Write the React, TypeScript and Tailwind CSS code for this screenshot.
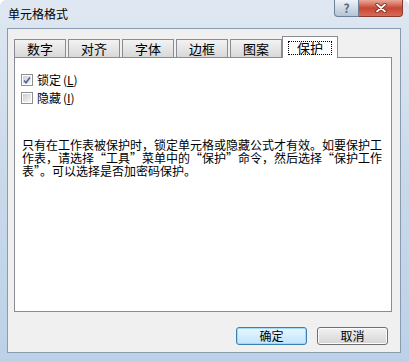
import React from 'react';

const tabs = ['数字', '对齐', '字体', '边框', '图案'];

const font = { fontFamily: '"Noto Sans CJK SC", "Liberation Sans", sans-serif' };

function CheckBox({ checked }: { checked?: boolean }) {
  return (
    <div className="w-[12px] h-[12px] border border-[#8e8f8f] bg-white p-[1px] shrink-0">
      <div className="w-full h-full bg-gradient-to-br from-[#cbcfd5] to-[#f6f6f6] flex items-center justify-center">
        {checked && (
          <svg width="9" height="9" viewBox="0 0 9 9">
            <path d="M1.2 4.6 L3.4 7 L7.8 1.2" fill="none" stroke="#4a5f97" strokeWidth="1.7" />
          </svg>
        )}
      </div>
    </div>
  );
}

export default function App() {
  return (
    <div
      className="w-[409px] h-[362px] flex flex-col bg-gradient-to-b from-[#dfe8f2] via-[#c9d9ea] to-[#bcd1e8] rounded-t-[6px] overflow-hidden text-black"
      style={font}
    >
      {/* Title bar */}
      <div className="h-[28px] shrink-0 flex items-start justify-between pl-[8px] pr-[6px]">
        <span className="mt-[6px] text-[12px] leading-[16px]">单元格格式</span>
        <div className="flex">
          <div className="w-[25px] h-[17px] border border-[#6e7f96] border-t-0 rounded-bl-[4px] bg-gradient-to-b from-[#eef3f8] to-[#b4c3d5] flex items-center justify-center text-[12px] leading-none font-bold text-[#5a6878]">
            ?
          </div>
          <div className="w-[44px] h-[17px] border border-[#8a3a2f] border-t-0 border-l-0 rounded-br-[4px] bg-gradient-to-b from-[#e9a797] via-[#c64635] to-[#d86a55] flex items-center justify-center">
            <svg width="12" height="10" viewBox="0 0 12 10">
              <path d="M2 1.5 L10 8.5 M10 1.5 L2 8.5" stroke="#5b1e16" strokeWidth="3.2" strokeLinecap="round" />
              <path d="M2 1.5 L10 8.5 M10 1.5 L2 8.5" stroke="#ffffff" strokeWidth="1.8" strokeLinecap="round" />
            </svg>
          </div>
        </div>
      </div>

      {/* Client area */}
      <div className="flex-1 ml-[7px] mr-[8px] mb-[9px] bg-[#f0f0f0] border border-[#8a9bb0] pt-[7px] px-[6px]">
        {/* Tabs */}
        <div className="flex items-end h-[21px] relative z-10">
          {tabs.map((t, i) => (
            <div
              key={t}
              className={
                'w-[52px] h-[18px] border border-b-0 border-[#898c95] bg-gradient-to-b from-[#f3f3f3] to-[#d8d8d8] flex items-center justify-center text-[13px] leading-none ' +
                (i < tabs.length - 1 ? 'mr-[2px]' : '')
              }
            >
              {t}
            </div>
          ))}
          <div className="w-[56px] h-[22px] -mb-px border border-b-0 border-[#898c95] bg-white flex items-center justify-center">
            <span className="border border-dotted border-black px-[8px] h-[14px] flex items-center text-[13px] leading-none">保护</span>
          </div>
        </div>

        {/* Panel */}
        <div className="w-[378px] h-[255px] border border-[#898c95] bg-white pt-[13px] pl-[6px]">
          <div className="flex items-center gap-[4px] h-[18px] text-[12px]">
            <CheckBox checked />
            <span>
              锁定<span className="ml-[2px]">(<u>L</u>)</span>
            </span>
          </div>
          <div className="flex items-center gap-[4px] h-[18px] text-[12px]">
            <CheckBox />
            <span>
              隐藏<span className="ml-[2px]">(<u>I</u>)</span>
            </span>
          </div>
          <div
            className="mt-[31px] pl-[1px] text-[12px] leading-[13px] whitespace-nowrap"
            style={{ fontFeatureSettings: '"fwid"' }}
          >
            <div>只有在工作表被保护时，锁定单元格或隐藏公式才有效。如要保护工</div>
            <div>作表，请选择“工具”菜单中的“保护”命令，然后选择“保护工作</div>
            <div>表”。可以选择是否加密码保护。</div>
          </div>
        </div>

        {/* Buttons */}
        <div className="mt-[15px] flex justify-end gap-[10px] pr-[6px]">
          <button className="w-[71px] h-[18px] rounded-[3px] border border-[#3c7fb1] bg-gradient-to-b from-[#eaf6fd] to-[#bee6fd] text-[12px] leading-none shadow-[inset_0_0_0_1px_#a7d9f5]">
            确定
          </button>
          <button className="w-[71px] h-[18px] rounded-[3px] border border-[#707070] bg-gradient-to-b from-[#f2f2f2] to-[#d5d5d5] text-[12px] leading-none shadow-[inset_0_0_0_1px_#fcfcfc]">
            取消
          </button>
        </div>
      </div>
    </div>
  );
}
